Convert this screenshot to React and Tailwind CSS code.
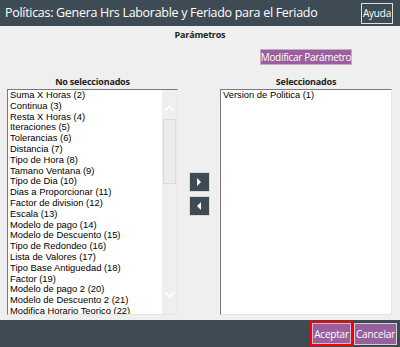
import React from "react";

const noSeleccionados = [
  "Suma X Horas (2)",
  "Continua (3)",
  "Resta X Horas (4)",
  "Iteraciones (5)",
  "Tolerancias (6)",
  "Distancia (7)",
  "Tipo de Hora (8)",
  "Tamano Ventana (9)",
  "Tipo de Dia (10)",
  "Dias a Proporcionar (11)",
  "Factor de division (12)",
  "Escala (13)",
  "Modelo de pago (14)",
  "Modelo de Descuento (15)",
  "Tipo de Redondeo (16)",
  "Lista de Valores (17)",
  "Tipo Base Antiguedad (18)",
  "Factor (19)",
  "Modelo de pago 2 (20)",
  "Modelo de Descuento 2 (21)",
  "Modifica Horario Teorico (22)",
];

const ui = { fontFamily: '"Open Sans", "Noto Sans", sans-serif' };
const list = { fontFamily: '"Liberation Sans", Arial, sans-serif' };

function ListBox({ items, scroll }) {
  return (
    <div className="relative h-[226px] bg-white border border-t-[#7a7a7a] border-l-[#7a7a7a] border-r-[#e6e6e6] border-b-[#e6e6e6] overflow-hidden">
      <ul className="pl-[2px] text-[9.4px] leading-[10.8px] text-black" style={list}>
        {items.map((it) => (
          <li key={it} className="whitespace-nowrap">{it}</li>
        ))}
      </ul>
      {scroll && (
        <div className="absolute right-0 top-0 bottom-0 w-[15px] bg-[#efefef] flex flex-col items-center">
          <svg width="11" height="8" viewBox="0 0 11 8" className="mt-[15px]">
            <path d="M1 6 L5.5 1.5 L10 6" stroke="#ffffff" strokeWidth="1.6" fill="none" />
          </svg>
          <div className="mt-[6px] w-[13px] h-[65px] border border-[#dadada] bg-[#ececec]" />
          <div className="flex-1" />
          <svg width="11" height="8" viewBox="0 0 11 8" className="mb-[16px]">
            <path d="M1 2 L5.5 6.5 L10 2" stroke="#ffffff" strokeWidth="1.6" fill="none" />
          </svg>
        </div>
      )}
    </div>
  );
}

function ArrowBtn({ dir }) {
  return (
    <button className="w-[21px] h-[20px] bg-[#3e4b55] border border-[#d8d8d8] flex items-center justify-center">
      <svg width="6" height="8" viewBox="0 0 6 8">
        {dir === "right" ? (
          <path d="M1 0 L5 4 L1 8 Z" fill="#ffffff" />
        ) : (
          <path d="M5 0 L1 4 L5 8 Z" fill="#ffffff" />
        )}
      </svg>
    </button>
  );
}

export default function App() {
  return (
    <div className="w-[400px] h-[347px] flex flex-col bg-[#efefef]" style={ui}>
      {/* barra de título */}
      <div className="h-[26px] bg-[#3e4b55] flex items-center justify-between pl-[5px] pr-[7px]">
        <span className="text-white text-[12.5px] tracking-[-0.3px] leading-none whitespace-nowrap">
          Políticas: Genera Hrs Laborable y Feriado para el Feriado
        </span>
        <button className="h-[21px] w-[32px] border border-[#e0e0e0] text-white text-[10px] tracking-[-0.2px] leading-none flex items-center justify-center">
          Ayuda
        </button>
      </div>

      {/* cuerpo */}
      <div className="flex-1 flex flex-col">
        <div className="mt-[3px] h-[12px] text-center text-[9px] font-bold tracking-[-0.2px] leading-[12px] text-[#222]">
          Parámetros
        </div>
        <div className="mt-[8px] pl-[7px] grid grid-cols-[171px_42px_172px]">
          <div className="flex flex-col justify-end">
            <div className="h-[12px] text-center text-[9px] font-bold tracking-[-0.2px] leading-[12px] text-[#222] mb-[1px]">
              No seleccionados
            </div>
            <ListBox items={noSeleccionados} scroll />
          </div>
          <div className="flex flex-col items-center pt-[123px] gap-[4px]">
            <ArrowBtn dir="right" />
            <ArrowBtn dir="left" />
          </div>
          <div className="flex flex-col">
            <div className="flex justify-center">
              <button className="h-[16px] w-[92px] bg-[#9a5f9d] border border-[#c9a9cb] text-white text-[10px] tracking-[-0.3px] leading-none whitespace-nowrap flex items-center justify-center">
                Modificar Parámetro
              </button>
            </div>
            <div className="mt-[11px] h-[12px] text-center text-[9px] font-bold tracking-[-0.2px] leading-[12px] text-[#222] mb-[1px]">
              Seleccionados
            </div>
            <ListBox items={["Version de Politica (1)"]} />
          </div>
        </div>
      </div>

      {/* pie */}
      <div className="h-[27px] bg-[#3e4b55] flex items-center justify-end pr-[3px] gap-[1px]">
        <div className="border-2 border-[#ff0000] h-[25px] w-[43px] flex">
          <button className="flex-1 bg-[#9a5f9d] border border-[#d0b8d2] text-white text-[10px] tracking-[-0.2px] leading-none">
            Aceptar
          </button>
        </div>
        <button className="h-[22px] w-[43px] bg-[#9a5f9d] border border-[#cfcfcf] text-white text-[10px] tracking-[-0.2px] leading-none">
          Cancelar
        </button>
      </div>
    </div>
  );
}
